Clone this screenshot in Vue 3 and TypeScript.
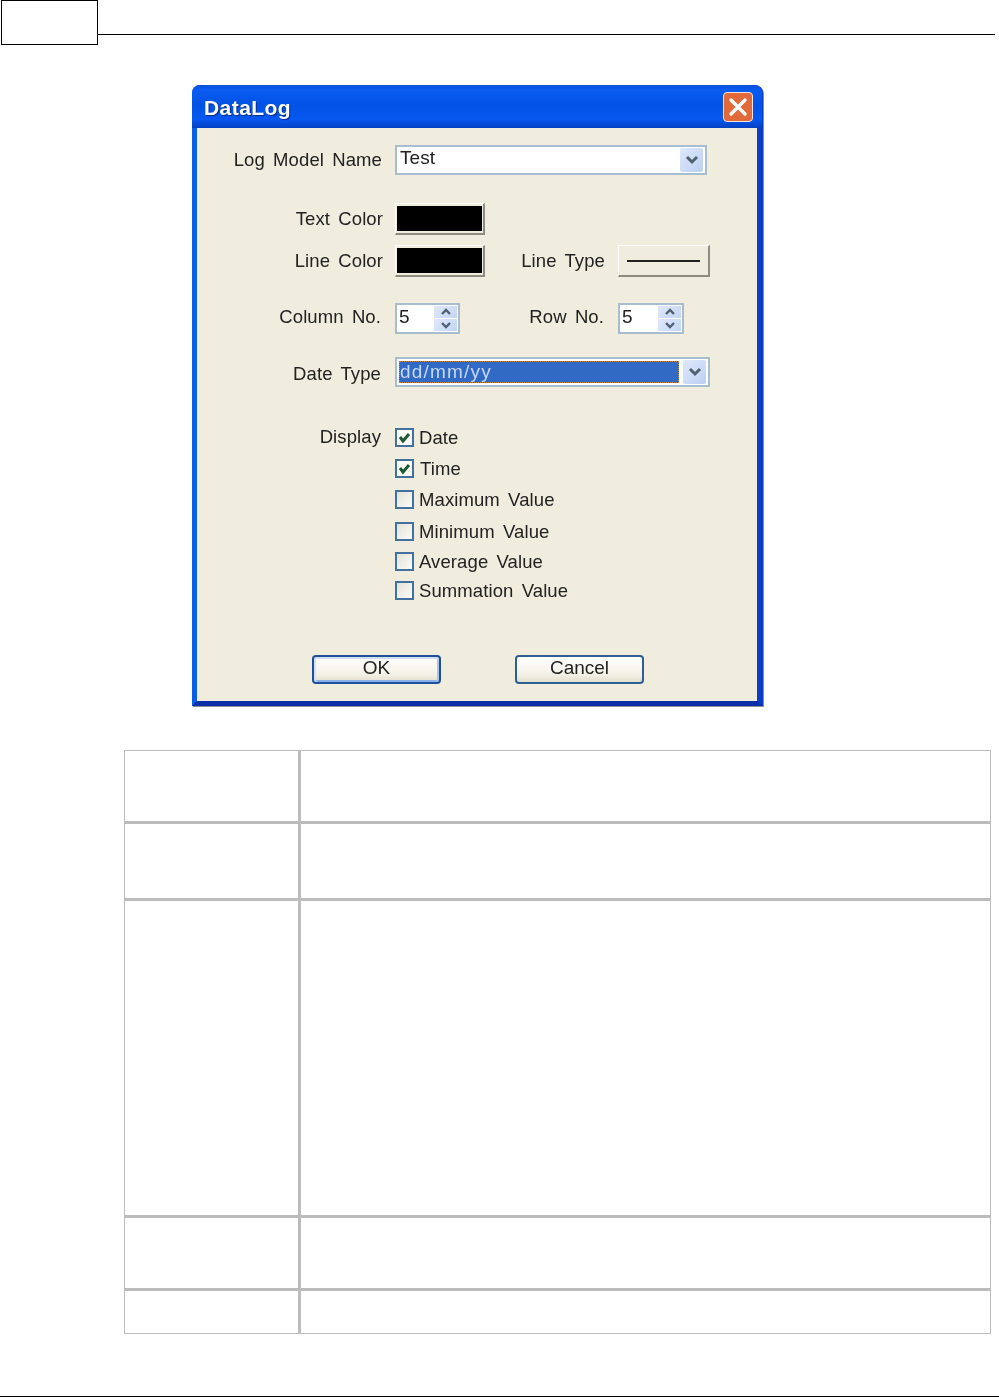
<script setup lang="ts">
interface Check { label: string; checked: boolean }
const checks: Check[] = [
  { label: 'Date', checked: true },
  { label: 'Time', checked: true },
  { label: 'Maximum Value', checked: false },
  { label: 'Minimum Value', checked: false },
  { label: 'Average Value', checked: false },
  { label: 'Summation Value', checked: false },
]
const tableRows: string[] = ['r1', 'r2', 'r3', 'r4', 'r5']
</script>

<template>
  <div class="page">
    <header class="top">
      <div class="tab"></div>
      <div class="rule"></div>
    </header>

    <section class="dialog">
      <div class="titlebar">
        <span class="title">DataLog</span>
        <span class="close">
          <svg width="20" height="20" viewBox="0 0 20 20"><path d="M3 3L17 17M17 3L3 17" stroke="#fff" stroke-width="3.4" stroke-linecap="round" /></svg>
        </span>
      </div>
      <div class="client">
        <div class="row row-name">
          <label class="lbl">Log Model Name</label>
          <div class="combo combo-name">
            <span class="combo-text">Test</span>
            <span class="drop">
              <svg width="14" height="10" viewBox="0 0 14 10"><path d="M2 2L7 7L12 2" fill="none" stroke="#4f6070" stroke-width="3" /></svg>
            </span>
          </div>
        </div>

        <div class="row row-text">
          <label class="lbl lbl-color">Text Color</label>
          <button class="swatch"><span></span></button>
        </div>

        <div class="row row-line">
          <label class="lbl lbl-color">Line Color</label>
          <button class="swatch"><span></span></button>
          <label class="lbl-side lbl-type">Line Type</label>
          <button class="linetype"><span></span></button>
        </div>

        <div class="row row-spin">
          <label class="lbl lbl-tight lift">Column No.</label>
          <div class="spin">
            <span class="spin-val">5</span>
            <span class="arrows">
              <span class="arrow"><svg width="12" height="8" viewBox="0 0 12 8"><path d="M2 6L6 2L10 6" fill="none" stroke="#4f6070" stroke-width="2.4" /></svg></span>
              <span class="arrow"><svg width="12" height="8" viewBox="0 0 12 8"><path d="M2 2L6 6L10 2" fill="none" stroke="#4f6070" stroke-width="2.4" /></svg></span>
            </span>
          </div>
          <label class="lbl-side lbl-row lift">Row No.</label>
          <div class="spin spin-wide">
            <span class="spin-val">5</span>
            <span class="arrows">
              <span class="arrow"><svg width="12" height="8" viewBox="0 0 12 8"><path d="M2 6L6 2L10 6" fill="none" stroke="#4f6070" stroke-width="2.4" /></svg></span>
              <span class="arrow"><svg width="12" height="8" viewBox="0 0 12 8"><path d="M2 2L6 6L10 2" fill="none" stroke="#4f6070" stroke-width="2.4" /></svg></span>
            </span>
          </div>
        </div>

        <div class="row row-date">
          <label class="lbl lbl-tight drop-label">Date Type</label>
          <div class="combo combo-date">
            <span class="selected">dd/mm/yy</span>
            <span class="drop">
              <svg width="14" height="10" viewBox="0 0 14 10"><path d="M2 2L7 7L12 2" fill="none" stroke="#4f6070" stroke-width="3" /></svg>
            </span>
          </div>
        </div>

        <div class="row row-display">
          <label class="lbl lbl-tight lbl-display">Display</label>
          <div class="checks">
            <div v-for="c in checks" :key="c.label" class="check">
              <span class="box" :class="{ on: c.checked }">
                <svg v-if="c.checked" width="15" height="15" viewBox="0 0 15 15"><path d="M3 7L6 11L12 4" fill="none" stroke="#1f5a34" stroke-width="3" /></svg>
              </span>
              <span class="check-label">{{ c.label }}</span>
            </div>
          </div>
        </div>

        <div class="actions">
          <button class="btn default"><span>OK</span></button>
          <button class="btn"><span>Cancel</span></button>
        </div>
      </div>
    </section>

    <section class="table">
      <div v-for="r in tableRows" :key="r" class="trow" :class="r">
        <div class="cell-a"></div>
        <div class="cell-b"></div>
      </div>
    </section>

    <footer class="foot"></footer>
  </div>
</template>

<style>
html, body { margin: 0; background: #fff; }
</style>

<style scoped>
.page {
  width: 999px;
  height: 1397px;
  position: relative;
  overflow: hidden;
  background: #fff;
  font-family: "Liberation Sans", Arial, sans-serif;
}
.top { display: flex; height: 45px; padding-left: 1px; box-sizing: border-box; }
.tab { width: 97px; height: 45px; border: 1px solid #000; box-sizing: border-box; }
.rule { width: 897px; height: 1px; margin-top: 34px; background: #000; }

.dialog {
  margin: 40px 0 0 192px;
  width: 571px;
  height: 621px;
  box-sizing: border-box;
  display: flex;
  flex-direction: column;
  border-radius: 8px 8px 0 0;
  background: #0a5be0;
  border-left: 5px solid #0b5ce8;
  border-right: 6px solid #0a3cc4;
  border-bottom: 5px solid #0a2fa8;
  box-shadow: 1px 1px 0 #8a8f9a;
  filter: blur(0.4px);
}
.titlebar {
  height: 43px;
  margin: 0 -5px 0 -5px;
  padding: 0 9px 0 12px;
  display: flex;
  align-items: center;
  justify-content: space-between;
  border-radius: 8px 8px 0 0;
  background: linear-gradient(#0a50d8 0%, #0a5cf0 12%, #0352e6 45%, #0658f0 80%, #0440c0 100%);
}
.title {
  color: #fff;
  font-size: 21px;
  font-weight: 700;
  letter-spacing: 0.45px;
  margin-top: 3px;
  text-shadow: 1px 1px 1px #0a2c80;
}
.close {
  width: 30px;
  height: 30px;
  box-sizing: border-box;
  border: 1px solid #f2e4dc;
  border-radius: 4px;
  background: #e2693a;
  display: flex;
  align-items: center;
  justify-content: center;
  margin-top: 1px;
}
.client {
  flex: 1;
  background: #f0eddf;
  padding-top: 17px;
  color: #222;
  font-size: 18.5px;
  letter-spacing: 0.1px;
  word-spacing: 3px;
}
.row { display: flex; align-items: center; }
.lbl { width: 185px; text-align: right; margin-right: 13px; white-space: nowrap; }
.lbl-color { width: 186px; margin-right: 12px; }
.lbl-tight { width: 184px; margin-right: 14px; }
.lbl-side { text-align: right; white-space: nowrap; }
.lbl-type { width: 120px; margin-right: 13px; }
.lbl-row { width: 144px; margin-right: 14px; }
.lift { margin-top: -3px; }
.drop-label { margin-top: 4px; }

.row-name { height: 30px; }
.row-text { height: 32px; margin-top: 28px; }
.row-line { height: 32px; margin-top: 10px; }
.row-spin { height: 31px; margin-top: 26px; }
.row-date { height: 30px; margin-top: 23px; }
.row-display { margin-top: 41px; align-items: flex-start; }
.lbl-display { line-height: 18px; }

.combo {
  height: 30px;
  box-sizing: border-box;
  border: 2px solid #a9bdd2;
  background: #fff;
  display: flex;
  align-items: center;
  justify-content: space-between;
}
.combo-name { width: 312px; padding: 0 2px 0 3px; }
.combo-text { font-size: 19px; margin-top: -4px; color: #222; }
.combo-date { width: 315px; padding: 0 2px; gap: 4px; }
.drop {
  width: 23px;
  height: 24px;
  flex: none;
  border-radius: 2px;
  background: linear-gradient(135deg, #dfe8fb, #bcd0f4);
  display: flex;
  align-items: center;
  justify-content: center;
}
.selected {
  flex: 1;
  height: 22px;
  box-sizing: border-box;
  background: #316ac5;
  border: 1px dotted #c9803a;
  color: #c6d8f4;
  font-size: 19px;
  line-height: 19px;
  letter-spacing: 1.2px;
}

.swatch {
  width: 90px;
  height: 32px;
  box-sizing: border-box;
  background: #f0eddf;
  border: none;
  border-top: 1px solid #fff;
  border-left: 1px solid #fff;
  border-right: 2px solid #8d8c80;
  border-bottom: 2px solid #8d8c80;
  display: block;
  padding: 2px 1px 2px 1px;
}
.swatch span { display: block; width: 100%; height: 100%; background: #000; }
.linetype {
  width: 92px;
  height: 32px;
  padding: 0 8px;
  box-sizing: border-box;
  background: #f0eddf;
  border: none;
  border-top: 1px solid #fff;
  border-left: 1px solid #fff;
  border-right: 2px solid #8d8c80;
  border-bottom: 2px solid #8d8c80;
  display: flex;
  align-items: center;
}
.linetype span { display: block; width: 100%; height: 2px; background: #222; }

.spin {
  width: 65px;
  height: 31px;
  box-sizing: border-box;
  border: 2px solid #a9bdd2;
  background: #fff;
  display: flex;
  justify-content: space-between;
  padding: 1px 1px 1px 2px;
}
.spin-wide { width: 66px; }
.spin-val { line-height: 21px; color: #222; font-size: 19px; }
.arrows { width: 23px; display: flex; flex-direction: column; gap: 1px; }
.arrow {
  flex: 1;
  background: linear-gradient(135deg, #dfe8fb, #c3d5f5);
  display: flex;
  align-items: center;
  justify-content: center;
}

.checks { display: flex; flex-direction: column; }
.check { display: flex; align-items: center; height: 19px; }
.check:nth-child(2) { margin-top: 12px; }
.check:nth-child(3) { margin-top: 12px; }
.check:nth-child(4) { margin-top: 13px; }
.check:nth-child(5) { margin-top: 11px; }
.check:nth-child(6) { margin-top: 10px; }
.check:nth-child(2) .check-label { margin-left: 6px; }
.box {
  width: 19px;
  height: 19px;
  flex: none;
  box-sizing: border-box;
  border: 2px solid #44709f;
  background: linear-gradient(135deg, #e4e2d8, #fbfbf8);
  display: flex;
  align-items: center;
  justify-content: center;
}
.box.on { background: #fbfbf6; }
.check-label { margin-left: 5px; white-space: nowrap; }

.actions { display: flex; gap: 74px; margin-top: 55px; padding-left: 115px; }
.btn {
  width: 129px;
  height: 29px;
  padding: 0;
  box-sizing: border-box;
  border: 2px solid #2e5f92;
  border-radius: 4px;
  background: linear-gradient(#fff, #f3f1e6 70%, #e2dfce);
  color: #222;
  font-family: "Liberation Sans", Arial, sans-serif;
  font-size: 19px;
  line-height: 22px;
  display: flex;
  align-items: flex-start;
  justify-content: center;
}
.btn.default {
  border-color: #1f4f9a;
  box-shadow: inset 0 2px 0 #cfe0f8, inset 2px 0 0 #cfe0f8, inset -2px 0 0 #a8c4ee, inset 0 -2px 0 #8eb0ea;
}

.table {
  margin: 44px 0 0 124px;
  width: 867px;
  box-sizing: border-box;
  border: 1px solid #bcbcbc;
}
.trow { display: flex; border-bottom: 3px solid #bcbcbc; }
.trow:last-child { border-bottom: none; }
.cell-a { width: 173px; border-right: 3px solid #bcbcbc; flex: none; }
.cell-b { flex: 1; }
.r1 { height: 70px; }
.r2 { height: 74px; }
.r3 { height: 314px; }
.r4 { height: 70px; }
.r5 { height: 42px; }

.foot { position: absolute; left: 0; right: 0; bottom: 0; height: 1px; background: #000; }
</style>
